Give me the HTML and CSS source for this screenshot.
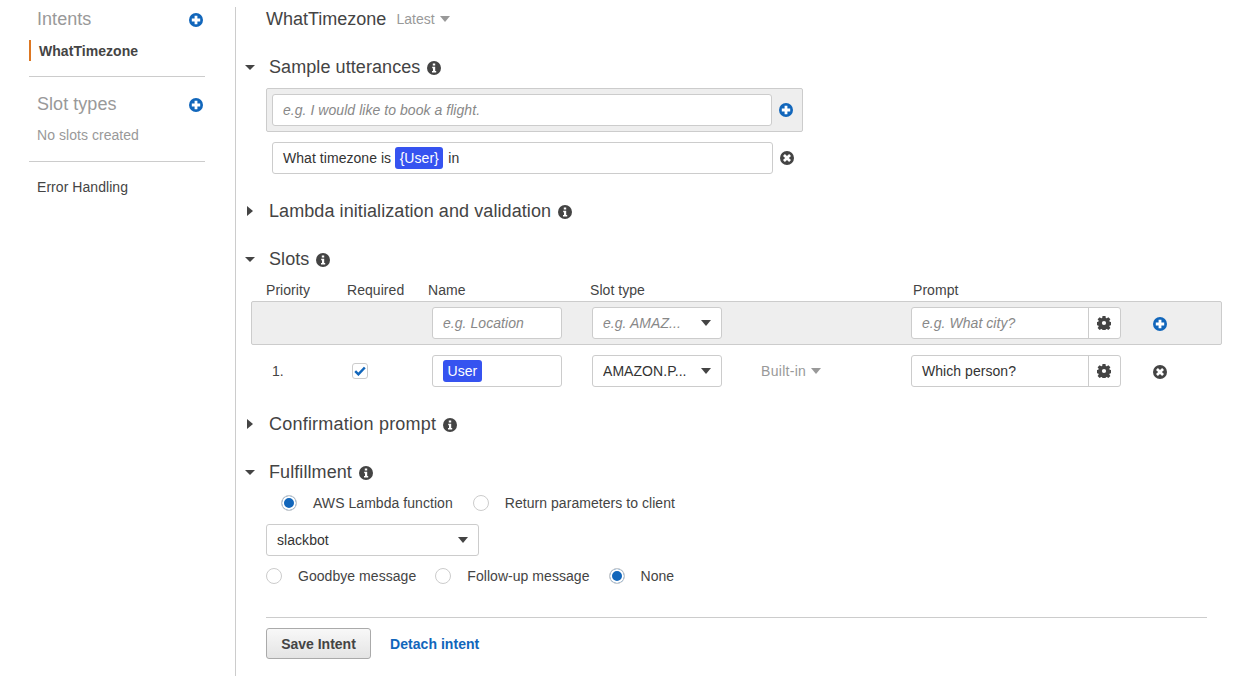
FILE: index.html
```html
<!DOCTYPE html>
<html lang="en">
<head>
    <meta charset="UTF-8">
    <title>WhatTimezone</title>
    <link rel="stylesheet" href="styles.css">
</head>
<body>
    <svg class="defs" width="0" height="0">
        <symbol id="plus" viewBox="0 0 14 14">
            <circle cx="7" cy="7" r="7" fill="#1166bb"/>
            <path d="M5.6 2.8h2.8v2.8h2.8v2.8H8.4v2.8H5.6V8.4H2.8V5.6h2.8z" fill="#fff"/>
        </symbol>
        <symbol id="close" viewBox="0 0 14 14">
            <circle cx="7" cy="7" r="7" fill="#444"/>
            <path d="M4.9 3 7 5.1 9.1 3 11 4.9 8.9 7 11 9.1 9.1 11 7 8.9 4.9 11 3 9.1 5.1 7 3 4.9z" fill="#fff"/>
        </symbol>
        <symbol id="info" viewBox="0 0 14 14">
            <circle cx="7" cy="7" r="7" fill="#444"/>
            <path d="M5.8 2.4h2.4v2H5.8zM5.2 5.7h3v4.2h1v1.7H5v-1.7h1V7.3h-.8z" fill="#fff"/>
        </symbol>
        <symbol id="gear" viewBox="0 0 14 14">
            <path fill="#444" fill-rule="evenodd" d="M5.500 0h3l.3 1.900 1 .4 1.600-1.100 2 2-1.100 1.600.4 1 1.900.3v3l-1.900.3-.4 1 1.100 1.600-2 2-1.600-1.100-1 .4-.3 1.900h-3l-.3-1.900-1-.4-1.600 1.100-2-2 1.100-1.600-.4-1-1.900-.3v-3l1.900-.3.4-1-1.100-1.600 2-2 1.600 1.100 1-.4zM7 4.900a2.100 2.100 0 1 0 0 4.200 2.100 2.100 0 0 0 0-4.200z"/>
        </symbol>
    </svg>

    <div class="page">
        <nav class="sidebar">
            <div class="side-head">
                <span>Intents</span>
                <svg class="icon"><use href="#plus"/></svg>
            </div>
            <div class="side-active">WhatTimezone</div>
            <hr class="side-line">
            <div class="side-head">
                <span>Slot types</span>
                <svg class="icon"><use href="#plus"/></svg>
            </div>
            <div class="side-note">No slots created</div>
            <hr class="side-line">
            <div class="side-link">Error Handling</div>
        </nav>

        <main class="main">
            <div class="title-row">
                <span class="title">WhatTimezone</span>
                <span class="muted">Latest</span>
                <span class="caret caret-muted"></span>
            </div>

            <section class="section utterances">
                <h2 class="heading"><span class="tri-down"></span>Sample utterances <svg class="icon"><use href="#info"/></svg></h2>
                <div class="band utter-band">
                    <div class="field utter-input placeholder">e.g. I would like to book a flight.</div>
                    <svg class="icon"><use href="#plus"/></svg>
                </div>
                <div class="utter-row">
                    <div class="field utter-saved">What timezone is <span class="tag tag-inline">{User}</span> in</div>
                    <svg class="icon"><use href="#close"/></svg>
                </div>
            </section>

            <section class="section lambda">
                <h2 class="heading"><span class="tri-right"></span>Lambda initialization and validation <svg class="icon"><use href="#info"/></svg></h2>
            </section>

            <section class="section slots">
                <h2 class="heading"><span class="tri-down"></span>Slots <svg class="icon"><use href="#info"/></svg></h2>
                <div class="slot-labels">
                    <span>Priority</span>
                    <span>Required</span>
                    <span>Name</span>
                    <span>Slot type</span>
                    <span>Prompt</span>
                </div>
                <div class="band slot-row">
                    <span></span>
                    <span></span>
                    <div class="field placeholder">e.g. Location</div>
                    <div class="field select placeholder"><span class="clip">e.g. AMAZ...</span><span class="caret"></span></div>
                    <span></span>
                    <div class="field prompt">
                        <span class="prompt-text placeholder">e.g. What city?</span>
                        <span class="prompt-btn"><svg class="icon"><use href="#gear"/></svg></span>
                    </div>
                    <svg class="icon slot-action"><use href="#plus"/></svg>
                </div>
                <div class="slot-row slot-saved">
                    <span class="slot-num">1.</span>
                    <span class="check">
                        <svg width="12" height="10" viewBox="0 0 12 10"><path d="M1.200 5.200 4.400 8.300 10.800 1.500" fill="none" stroke="#1166bb" stroke-width="2.500"/></svg>
                    </span>
                    <div class="field"><span class="tag">User</span></div>
                    <div class="field select"><span class="clip">AMAZON.P...</span><span class="caret"></span></div>
                    <span class="builtin"><span class="muted">Built-in</span><span class="caret caret-muted"></span></span>
                    <div class="field prompt">
                        <span class="prompt-text">Which person?</span>
                        <span class="prompt-btn"><svg class="icon"><use href="#gear"/></svg></span>
                    </div>
                    <svg class="icon slot-action"><use href="#close"/></svg>
                </div>
            </section>

            <section class="section confirm">
                <h2 class="heading"><span class="tri-right"></span>Confirmation prompt <svg class="icon"><use href="#info"/></svg></h2>
            </section>

            <section class="section fulfillment">
                <h2 class="heading"><span class="tri-down"></span>Fulfillment <svg class="icon"><use href="#info"/></svg></h2>
                <div class="radio-row radio-top">
                    <span class="radio on"></span><span class="radio-label">AWS Lambda function</span>
                    <span class="radio"></span><span>Return parameters to client</span>
                </div>
                <div class="field select lambda-select"><span>slackbot</span><span class="caret"></span></div>
                <div class="radio-row radio-bottom">
                    <span class="radio"></span><span class="radio-label">Goodbye message</span>
                    <span class="radio"></span><span class="radio-label">Follow-up message</span>
                    <span class="radio on"></span><span>None</span>
                </div>
            </section>

            <div class="actions">
                <button class="save-btn">Save Intent</button>
                <a class="detach" href="#">Detach intent</a>
            </div>
        </main>
    </div>
</body>
</html>
```

FILE: styles.css
```css
* {
    box-sizing: border-box;
}

html, body {
    height: 100%;
    overflow: hidden;
}

body {
    margin: 0;
    background-color: #fff;
    color: #444;
    font-family: "Liberation Sans", Arial, sans-serif;
    font-size: 14px;
    letter-spacing: 0.05px;
}

.defs {
    position: absolute;
}

.icon {
    display: block;
    width: 14px;
    height: 14px;
    flex: none;
}

.page {
    display: flex;
    height: 676px;
    padding-top: 7px;
}

/* left column */
.sidebar {
    width: 236px;
    flex: none;
    padding: 0 30px 0 29px;
    border-right: 1px solid #ccc;
}

.side-head {
    display: flex;
    justify-content: space-between;
    align-items: center;
    padding: 0 2px 0 8px;
    font-size: 18px;
    color: #999;
    height: 24px;
}

.side-head .icon {
    margin-top: 2px;
}

.side-active {
    margin-top: 9px;
    height: 21px;
    padding: 1px 0 0 8px;
    line-height: 21px;
    border-left: 2px solid #dd7722;
    font-weight: bold;
    color: #444;
}

.side-line {
    margin: 15px 0 15px;
    border: 0;
    border-top: 1px solid #ccc;
}

.side-note {
    margin-top: 8px;
    padding-left: 8px;
    height: 22px;
    line-height: 22px;
    color: #999;
}

.side-link {
    padding-left: 8px;
    line-height: 20px;
}

/* right column */
.main {
    flex: 1;
    padding: 0 35px 0 30px;
}

.title-row {
    display: flex;
    align-items: center;
    height: 24px;
}

.title {
    font-size: 18px;
    letter-spacing: 0;
    color: #444;
    margin-right: 10px;
}

.muted {
    color: #999;
}

.caret {
    display: inline-block;
    width: 0;
    height: 0;
    border-left: 5px solid transparent;
    border-right: 5px solid transparent;
    border-top: 6px solid #444;
    flex: none;
}

.caret-muted {
    border-top-color: #999;
    margin-left: 5px;
}

.heading {
    display: flex;
    align-items: center;
    gap: 7px;
    height: 24px;
    margin: 0 0 0 -21px;
    font-size: 18px;
    font-weight: normal;
    letter-spacing: 0.08px;
    color: #444;
}

.heading .icon {
    margin-top: 1px;
}

.tri-down, .tri-right {
    width: 10px;
    margin-right: 7px;
    flex: none;
    height: 0;
    border-style: solid;
    border-color: transparent;
}

.tri-down {
    border-width: 5px 5px 0 5px;
    border-top-color: #444;
}

.tri-right {
    width: 0;
    margin: 0 9px 0 2px;
    border-width: 5px 0 5px 6px;
    border-left-color: #444;
}

.band {
    background: #eee;
    border: 1px solid #ccc;
    border-radius: 2px;
}

.field {
    display: flex;
    align-items: center;
    height: 32px;
    padding: 0 10px;
    background: #fff;
    border: 1px solid #ccc;
    border-radius: 3px;
    color: #333;
    white-space: nowrap;
}

.placeholder {
    color: #888;
    font-style: italic;
}

.tag {
    display: inline-block;
    padding: 0 4.5px;
    line-height: 22px;
    background: #3653f0;
    color: #fff;
    border-radius: 3px;
}

.tag-inline {
    margin: 0 1px 0 0;
}

.utterances {
    margin-top: 24px;
}

.utter-band {
    display: flex;
    align-items: center;
    gap: 7px;
    width: 537px;
    height: 44px;
    margin-top: 9px;
    padding: 0 9px 0 5px;
}

.utter-input {
    width: 500px;
}

.utter-row {
    display: flex;
    align-items: center;
    gap: 7px;
    margin: 10px 0 0 6px;
}

.utter-saved {
    width: 501px;
    white-space: pre;
}

.lambda {
    margin-top: 25px;
}

.slots {
    margin-top: 24px;
}

.slot-labels {
    display: grid;
    grid-template-columns: 81px 81px 162px 323px auto;
    margin-top: 9px;
    height: 21px;
    line-height: 20px;
}

.slot-row {
    display: grid;
    grid-template-columns: 81px 85px 130px 30px 130px 189px 210px 1fr;
    align-items: center;
    width: 971px;
    margin-left: -15px;
    padding-left: 15px;
}

.slot-row > .field:nth-child(4) {
    grid-column: 5;
}

.band.slot-row {
    height: 44px;
    padding-left: 14px;
}

.slot-saved {
    margin-top: 10px;
}

/* the saved row has no empty cells, so keep the built-in label in its own column */
.slot-saved > .field:nth-child(3) {
    grid-column: 3;
}

.slot-saved > .builtin {
    grid-column: 6;
    padding-left: 39px;
}

.slot-saved > .prompt {
    grid-column: 7;
}

.band.slot-row > .prompt {
    grid-column: 7;
}

.slot-action {
    grid-column: 8;
    margin: 2px 0 0 32px;
}

.slot-num {
    padding-left: 6px;
}

.check {
    display: flex;
    align-items: center;
    justify-content: center;
    width: 16px;
    height: 16px;
    margin-left: 5px;
    border: 1px solid #ccc;
    border-radius: 3px;
}

.builtin {
    display: flex;
    align-items: center;
}

.builtin .muted {
    letter-spacing: 0.3px;
}

.select {
    justify-content: space-between;
}

.clip {
    overflow: hidden;
}

.prompt {
    padding: 0;
}

.prompt-text {
    flex: 1;
    padding-left: 10px;
}

.prompt-btn {
    display: flex;
    align-items: center;
    justify-content: center;
    width: 32px;
    height: 100%;
    padding: 0 1px 1px 0;
    border-left: 1px solid #ccc;
}

.confirm {
    margin-top: 25px;
}

.confirm .heading {
    letter-spacing: 0.22px;
}

.fulfillment {
    margin-top: 24px;
}

.radio-row {
    display: flex;
    align-items: center;
    height: 20px;
}

.radio-top {
    margin: 9px 0 0 15px;
}

.radio-top .radio-label {
    margin-right: 20px;
}

.radio-bottom {
    margin-top: 10px;
}

.radio {
    flex: none;
    width: 16px;
    height: 16px;
    margin-right: 16px;
    background: #fff;
    border: 1px solid #ccc;
    border-radius: 50%;
}

.radio.on {
    background: #1166bb;
    box-shadow: inset 0 0 0 2px #fff;
}

.radio-label {
    margin-right: 19px;
}

.lambda-select {
    width: 213px;
    margin-top: 11px;
}

.actions {
    display: flex;
    align-items: center;
    gap: 19px;
    width: 941px;
    margin-top: 31px;
    padding-top: 10px;
    border-top: 1px solid #ccc;
}

.save-btn {
    width: 105px;
    height: 31px;
    padding: 0;
    background: linear-gradient(#f8f8f8, #e4e4e4);
    border: 1px solid #aaa;
    border-radius: 3px;
    color: #444;
    font: bold 14px "Liberation Sans", Arial, sans-serif;
}

.detach {
    color: #1166bb;
    font-weight: bold;
    text-decoration: none;
}
```
